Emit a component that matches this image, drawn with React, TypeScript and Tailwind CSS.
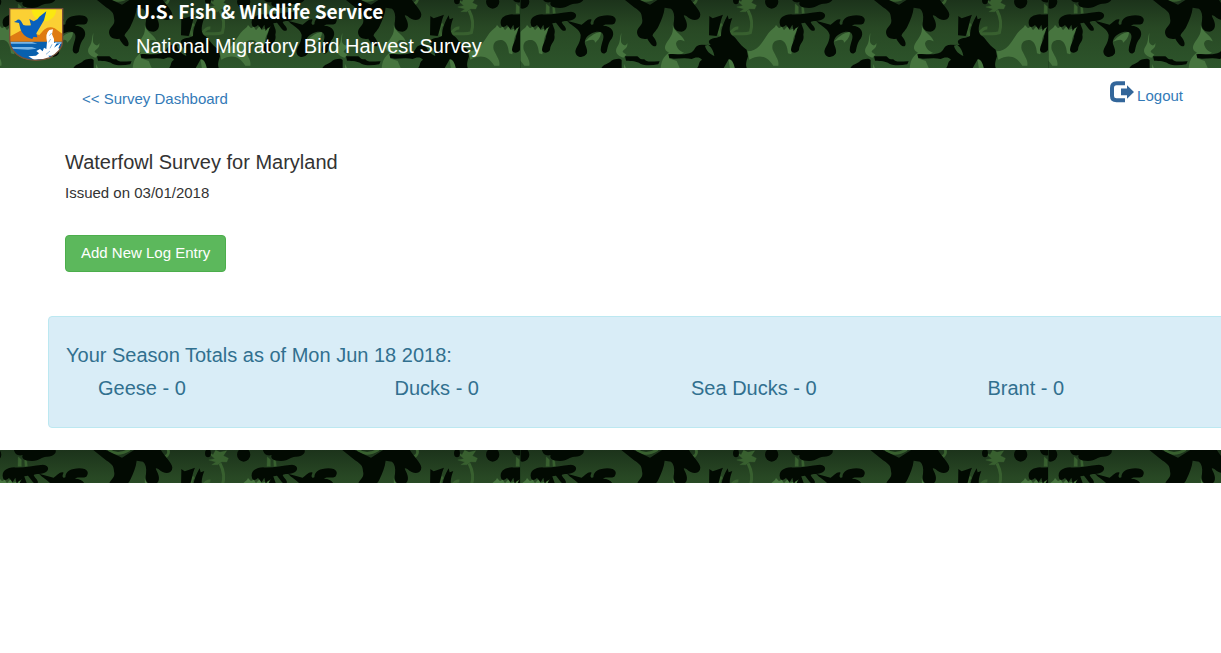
const totals = [
  { label: "Geese", count: 0 },
  { label: "Ducks", count: 0 },
  { label: "Sea Ducks", count: 0 },
  { label: "Brant", count: 0 },
]

export default function App() {
  return (
    <div className="overflow-x-clip bg-white font-['Liberation_Sans',Arial,sans-serif] text-[15px] leading-5 text-[#333333]">
      <header className="grid h-[68px] overflow-hidden">
        <Camo id="camo-header" top={0} />
        <div className="col-start-1 row-start-1 flex gap-[72px] pl-2 text-white">
          <Shield />
          <div>
            <h1 className="pb-[10px] font-['Noto_Sans_CJK_SC','Open_Sans',sans-serif] text-[19px] font-bold leading-[22px]">
              U.S. Fish &amp; Wildlife Service
            </h1>
            <p className="text-[20px] leading-7">National Migratory Bird Harvest Survey</p>
          </div>
        </div>
      </header>

      <main>
        <nav className="flex items-start justify-between pl-[82px] pr-[38px] pt-3">
          <a href="#dashboard" className="mt-[9px] text-[#337ab7]">
            &lt;&lt; Survey Dashboard
          </a>
          <a href="#logout" className="flex items-start gap-[3px] text-[#337ab7]">
            <LogoutIcon />
            <span className="mt-[6px]">Logout</span>
          </a>
        </nav>

        <section className="px-[65px] pt-[41px]">
          <h2 className="text-[20px] leading-6">Waterfowl Survey for Maryland</h2>
          <p className="mt-[9px]">Issued on 03/01/2018</p>
          <button
            type="button"
            className="mt-8 h-[37px] rounded-[4px] border border-[#4cae4c] bg-[#5cb85c] px-[15px] pb-[2px] text-white"
          >
            Add New Log Entry
          </button>
        </section>

        <section className="-mr-16 ml-12 mt-11 rounded-[4px] border border-[#bce8f1] bg-[#d9edf7] pb-[25px] pl-[17px] pt-6 text-[20px] leading-7 text-[#31708f]">
          <h3>Your Season Totals as of Mon Jun 18 2018:</h3>
          <div className="ml-8 mt-[5px] grid grid-cols-4">
            {totals.map((t) => (
              <div key={t.label}>
                {t.label} - {t.count}
              </div>
            ))}
          </div>
        </section>
      </main>

      <footer className="mt-[22px] grid h-[33px] overflow-hidden">
        <Camo id="camo-footer" top={3} />
      </footer>
    </div>
  )
}

function LogoutIcon() {
  return (
    <svg viewBox="0 0 24 22" className="mt-[1px] h-[22px] w-6" fill="none" aria-hidden="true">
      <path d="M15 2.3H6.5Q2 2.3 2 7V15Q2 19.2 6.5 19.2H15" stroke="#33669a" strokeWidth="4" />
      <path d="M11 7.6H17V4.2L24 11L17 17.8V14.2H11Z" fill="#33669a" />
    </svg>
  )
}

function Shield() {
  return (
    <svg viewBox="0 0 168 162" className="mt-[7px] h-[54px] w-[56px] shrink-0" aria-hidden="true">
      <defs>
        <clipPath id="shield">
          <path d="M5 5H164V100C164 124 145 142 126 152Q106 160 84 160Q62 160 42 152C23 142 5 124 5 100Z" />
        </clipPath>
      </defs>
      <g clipPath="url(#shield)">
        <path d="M0 0H168V162H0Z" fill="#fbd034" />
        <circle cx="108" cy="6" r="37" fill="#fbe810" />
        <path d="M0 102V92L40 70Q52 64 62 76L94 84L108 68Q124 56 140 64L168 84V112H0Z" fill="#de7b13" />
        <path d="M0 104H168V162H0Z" fill="#0860ae" />
        <path d="M0 105H72L88 110H0ZM10 120H72L86 125L60 128L12 125ZM140 105H168V110H140Z" fill="#79b5e5" />
        <path d="M18 45L25 41Q32 34 39 42L46 54Q58 57 69 55L64 36L77 43L88 37L94 29L115 13L108 40L94 64L85 79L88 91L76 90L73 96L65 94Q43 85 37 65L33 48Z" fill="#0860bd" />
        <path d="M84 146L93 139L85 132L96 126L104 133L108 122L115 126L117 104Q111 80 124 69L135 67L132 82L138 96L138 108L147 107L138 122L158 108L151 124L159 126L137 146L121 146L130 155L91 157L78 158L61 148Z" fill="white" />
        <path d="M124 86L131 78M122 106L128 96M126 124L132 112M114 142L126 132" stroke="#8dbbe0" strokeWidth="3" />
      </g>
      <path d="M5 5H164V100C164 124 145 142 126 152Q106 160 84 160Q62 160 42 152C23 142 5 124 5 100Z" fill="none" stroke="#765038" strokeWidth="4" />
    </svg>
  )
}

// The camouflage tile is 528px wide and repeats one motif every 249px inside it.
// Motif paths are drawn at three units per pixel.
function Camo({ id, top }: { id: string; top: number }) {
  return (
    <svg className="col-start-1 row-start-1 h-full w-full" aria-hidden="true">
      <defs>
        <linearGradient id={`${id}-shade`} x1="0" y1="0" x2="0" y2="1">
          <stop offset="0" stopColor="#1c331b" />
          <stop offset="0.4" stopColor="#284824" />
          <stop offset="1" stopColor="#2d552b" />
        </linearGradient>
        <g id={`${id}-motif`}>
          <g fill="#47753f">
            <path d="M683 154C714 152 724 131 742 104C754 86 764 86 768 75L777 85L785 80L792 91L803 78L808 90L837 82C827 99 818 109 818 135L814 163L804 160C802 139 797 125 783 120C763 118 754 130 758 149C768 171 778 181 775 197L760 197C742 168 719 162 688 179Z" />
            <path d="M195 125C207 112 221 99 243 95C243 110 235 120 225 128C226 116 213 117 195 125Z" />
            <path d="M304 99C303 118 301 127 307 132C315 140 319 135 322 129C324 148 308 147 308 156L319 164L310 173C290 166 283 154 292 140C302 126 299 112 304 99Z" />
            <path d="M458 75C463 98 488 104 494 124C480 117 470 118 468 131C470 146 482 154 492 158L453 177L470 183L480 206H422C424 184 429 170 447 158C431 149 431 139 446 119C456 105 461 95 458 75Z" />
            <path d="M625 174L644 181L650 206H630ZM296 188L303 206H294ZM312 192L319 206H312Z" />
          </g>
          <g fill="#38602f" stroke="#38602f">
            <path d="M79 12L88 20V40H78ZM98 22L104 20L106 40H99Z" strokeWidth="1" />
            <path d="M636 -12L663 6L671 -8L684 -2L704 -7L694 8L709 16L704 27L689 26L677 35L660 35L672 27L651 21L669 17L660 10Z" strokeWidth="1" />
            <path d="M684 31C693 48 700 70 691 98C673 106 653 98 632 102M632 98C641 87 646 83 655 84M602 109C592 89 598 77 606 72" fill="none" strokeWidth="9" />
            <path d="M505 15C526 14 533 1 528 -10M350 -10C370 8 391 3 413 -10" fill="none" strokeWidth="8" />
          </g>
          <g fill="#020a02">
            <ellipse cx="755" cy="5" rx="20" ry="21" />
            <path d="M65 -12H190C196 1 184 10 166 11C148 10 146 23 120 24C93 24 88 14 92 6C78 11 67 2 65 -12Z" />
            <path d="M33 75C27 54 45 44 66 43C91 46 121 37 153 35C176 38 171 56 154 61C142 65 134 60 125 66C129 76 143 84 136 92C124 96 117 77 108 68L97 70C99 81 108 89 103 104C108 125 91 128 90 150C83 162 67 160 66 150C66 135 78 121 78 108C84 96 82 86 90 79L80 85L74 93L70 74L62 88L51 75C43 83 35 82 33 75Z" />
            <path d="M141 62L185 74C196 67 204 54 215 59C209 69 212 77 220 73C221 54 236 47 262 46C289 46 292 61 283 71C271 77 257 69 249 77C276 77 287 98 275 116C264 128 263 145 260 155C253 165 242 159 242 150C244 125 257 111 246 98C233 91 209 98 198 115C187 132 205 142 201 160C192 176 168 174 166 155C166 143 182 130 182 105C178 88 162 80 150 71Z" />
            <path d="M300 -12H335L390 14L431 -12H505C520 15 547 34 540 50C533 65 514 62 499 48C490 44 490 46 494 53C504 70 505 91 485 95C463 95 458 80 462 62C464 45 461 33 453 26L434 23C432 42 425 59 415 80C408 94 397 101 398 108C405 115 414 130 408 138C400 143 389 129 382 116C365 119 351 112 351 96C352 81 368 78 367 61C364 42 367 38 342 22Z" />
            <path d="M243 206C251 190 264 193 274 182C286 176 300 174 305 180V206ZM315 169H352C359 173 358 179 373 178C379 189 401 183 419 184L415 193C397 196 375 198 361 191C350 183 335 183 318 182Z" />
            <path d="M568 48L578 55L609 44C601 62 600 81 590 108L567 106Z" />
            <path
              fillRule="evenodd"
              d="M445 163C470 160 495 168 515 157C529 146 522 136 545 134L572 135C559 121 571 115 590 113L603 108C603 84 614 61 623 46L626 58L637 54C629 75 625 94 636 106C649 111 656 134 680 149L684 169C679 185 676 194 681 206H645C641 188 634 176 626 178L610 206H530C540 194 534 186 546 179C537 169 525 172 515 177C490 172 465 179 448 175ZM555 137C559 153 570 162 583 168C581 151 572 139 564 134Z"
            />
            <ellipse cx="648" cy="0" rx="9" ry="13" />
          </g>
        </g>
        <pattern id={id} x="-8" y={top - 4} width="528" height="80" patternUnits="userSpaceOnUse" overflow="hidden">
          <g transform="translate(0 4) scale(.333333)">
            <use href={`#${id}-motif`} x="-747" />
            <use href={`#${id}-motif`} />
            <use href={`#${id}-motif`} x="747" />
            <use href={`#${id}-motif`} x="1494" />
          </g>
          <path d="M0 0V80" stroke="#1b391b" strokeWidth="1" />
        </pattern>
      </defs>
      <rect width="100%" height="68" fill={`url(#${id}-shade)`} />
      <rect width="100%" height="100%" fill={`url(#${id})`} />
    </svg>
  )
}
